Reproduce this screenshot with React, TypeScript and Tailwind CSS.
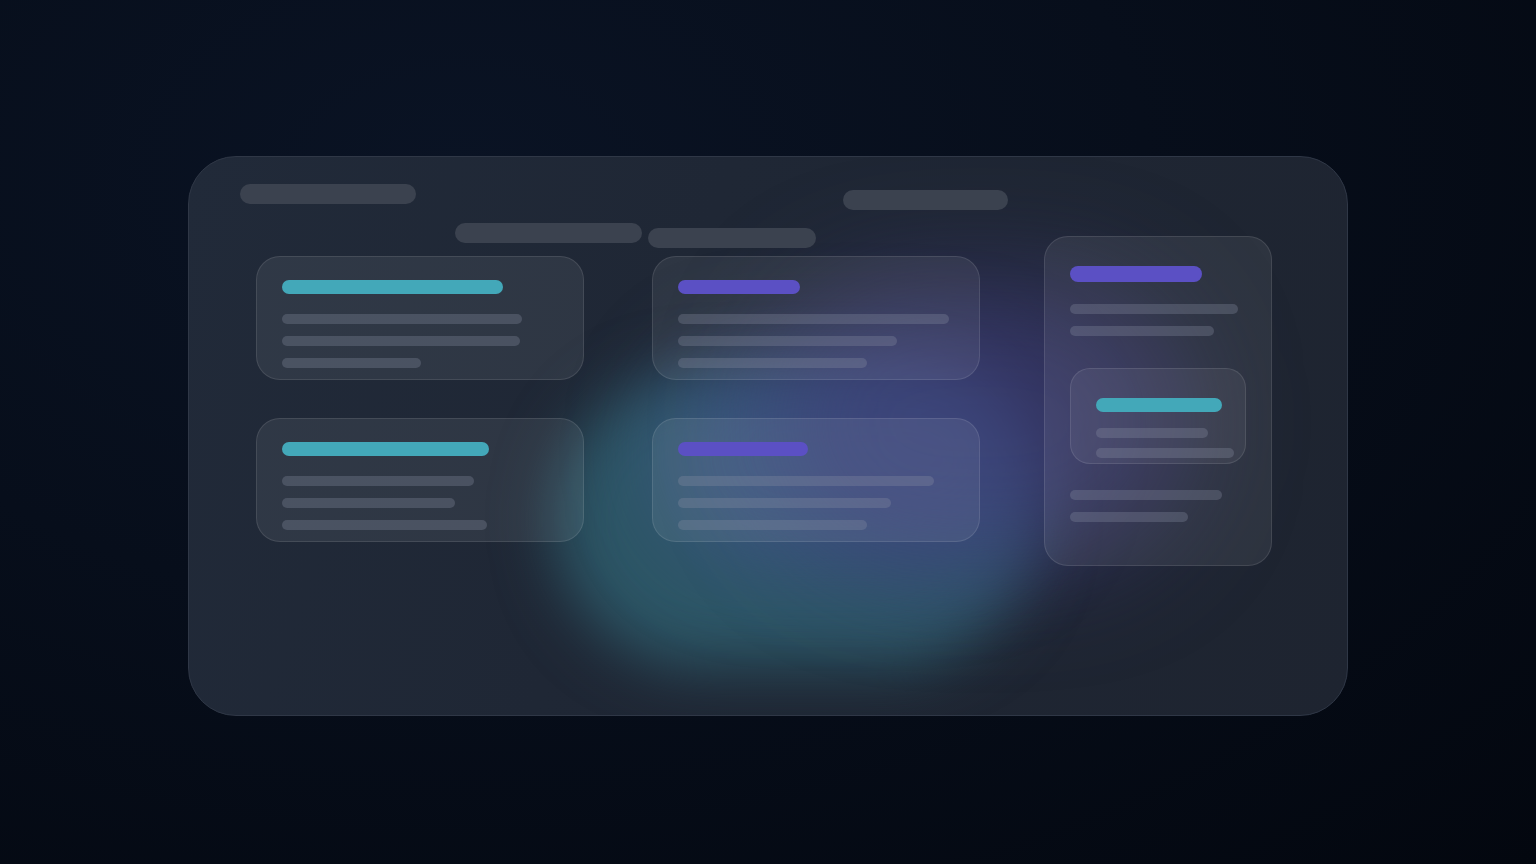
import React from "react";

const Line = ({ w, className = "" }: { w: string; className?: string }) => (
  <div className={`h-[10px] rounded-full bg-[#8a93a6]/30 ${w} ${className}`} />
);

function Card({
  accent,
  bar,
  lines,
}: {
  accent: "cyan" | "violet";
  bar: string;
  lines: string[];
}) {
  return (
    <div className="h-[124px] w-[328px] rounded-[24px] border border-white/10 bg-white/[0.07] px-[25px] pt-[23px]">
      <div
        className={`h-[14px] rounded-full ${bar} ${
          accent === "cyan" ? "bg-[#43a8b9]" : "bg-[#5b50c4]"
        }`}
      />
      <div className="mt-[20px] flex flex-col gap-[12px]">
        {lines.map((l, i) => (
          <Line key={i} w={l} />
        ))}
      </div>
    </div>
  );
}

export default function App() {
  return (
    <div className="relative h-[864px] w-[1536px] overflow-hidden bg-[radial-gradient(ellipse_at_30%_20%,#0a1324_0%,#070e1b_45%,#03070f_100%)] font-['Inter',sans-serif]">
      <div className="absolute left-[188px] top-[156px] h-[560px] w-[1160px] overflow-hidden rounded-[48px] border border-[#2f3746] bg-[linear-gradient(110deg,#212a39_0%,#1f2735_40%,#1e2430_100%)] pt-[27px]">
        {/* glows */}
        <div className="pointer-events-none absolute left-[365px] top-[215px] h-[295px] w-[480px] rounded-full bg-[#2f6272]/80 blur-[30px]" />
        <div className="pointer-events-none absolute left-[470px] top-[190px] h-[220px] w-[390px] rounded-full bg-[#45598f]/60 blur-[45px]" />
        <div className="pointer-events-none absolute left-[580px] top-[120px] h-[290px] w-[420px] rounded-full bg-[#3e3a78]/60 blur-[55px]" />

        <div className="relative">
          {/* row 1 */}
          <div className="flex h-[26px] items-start">
            <div className="ml-[51px] h-5 w-[176px] rounded-full bg-[#3b424f]" />
            <div className="ml-[427px] mt-[6px] h-5 w-[165px] rounded-full bg-[#3b424f]" />
          </div>
          {/* row 2 */}
          <div className="mt-[13px] flex h-[25px] items-start">
            <div className="ml-[266px] h-5 w-[187px] rounded-full bg-[#3b424f]" />
            <div className="ml-[6px] mt-[5px] h-5 w-[168px] rounded-full bg-[#3b424f]" />
          </div>

          {/* body */}
          <div className="mt-[8px] flex items-start">
            <div className="ml-[67px] flex flex-col gap-[38px]">
              <Card accent="cyan" bar="w-[221px]" lines={["w-[240px]", "w-[238px]", "w-[139px]"]} />
              <Card accent="cyan" bar="w-[207px]" lines={["w-[192px]", "w-[173px]", "w-[205px]"]} />
            </div>
            <div className="ml-[68px] flex flex-col gap-[38px]">
              <Card accent="violet" bar="w-[122px]" lines={["w-[271px]", "w-[219px]", "w-[189px]"]} />
              <Card accent="violet" bar="w-[130px]" lines={["w-[256px]", "w-[213px]", "w-[189px]"]} />
            </div>
            <div className="ml-[64px] -mt-[20px] h-[330px] w-[228px] rounded-[24px] border border-white/10 bg-white/[0.07] px-[25px] pt-[29px]">
              <div className="h-4 w-[132px] rounded-full bg-[#5b50c4]" />
              <div className="mt-[22px] flex flex-col gap-[12px]">
                <Line w="w-[168px]" />
                <Line w="w-[144px]" />
              </div>
              <div className="mt-[32px] h-[96px] w-[176px] rounded-[20px] border border-white/10 bg-white/[0.06] px-[25px] pt-[29px]">
                <div className="h-[14px] w-[126px] rounded-full bg-[#43a8b9]" />
                <div className="mt-[16px] flex flex-col gap-[10px]">
                  <Line w="w-[112px]" />
                  <Line w="w-[138px]" />
                </div>
              </div>
              <div className="mt-[26px] flex flex-col gap-[12px]">
                <Line w="w-[152px]" />
                <Line w="w-[118px]" />
              </div>
            </div>
          </div>
        </div>
      </div>
    </div>
  );
}
